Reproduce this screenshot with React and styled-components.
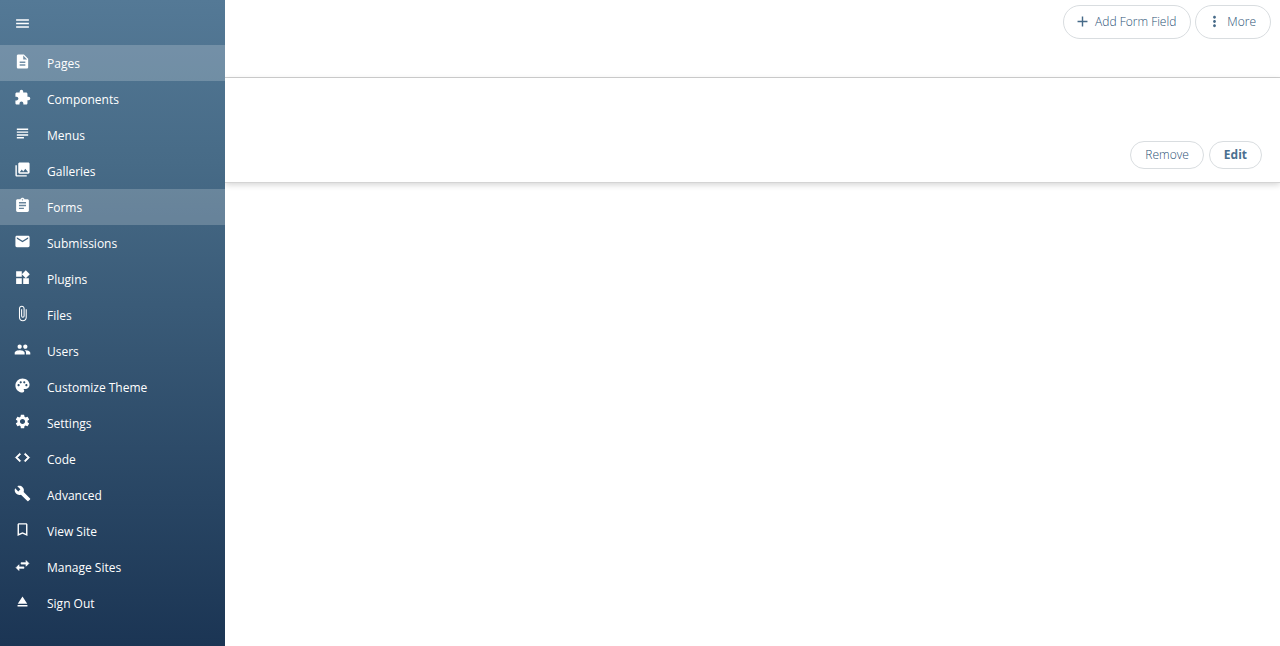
import React from 'react'
import styled, { createGlobalStyle } from 'styled-components'
import {
    MdMenu, MdDescription, MdExtension, MdSubject, MdCollections, MdAssignment, MdEmail,
    MdWidgets, MdAttachFile, MdPeople, MdPalette, MdSettings, MdCode, MdBuild,
    MdBookmarkBorder, MdSwapHoriz, MdEject, MdAdd, MdMoreVert
} from 'react-icons/md'

const links = [
    { name: 'Pages', Icon: MdDescription, active: true },
    { name: 'Components', Icon: MdExtension },
    { name: 'Menus', Icon: MdSubject },
    { name: 'Galleries', Icon: MdCollections },
    { name: 'Forms', Icon: MdAssignment, active: true },
    { name: 'Submissions', Icon: MdEmail },
    { name: 'Plugins', Icon: MdWidgets },
    { name: 'Files', Icon: MdAttachFile },
    { name: 'Users', Icon: MdPeople },
    { name: 'Customize Theme', Icon: MdPalette },
    { name: 'Settings', Icon: MdSettings },
    { name: 'Code', Icon: MdCode, bold: true },
    { name: 'Advanced', Icon: MdBuild },
    { name: 'View Site', Icon: MdBookmarkBorder },
    { name: 'Manage Sites', Icon: MdSwapHoriz, bold: true },
    { name: 'Sign Out', Icon: MdEject }
]

const App = () => {
    return (
        <Layout>
            <GlobalStyle />
            <Sidebar>
                <MenuButton type="button" aria-label="Toggle menu">
                    <MdMenu size={17} />
                </MenuButton>
                <nav>
                    {links.map(({ name, Icon, active, bold }) => (
                        <NavLink key={name} href="#" $active={active} $bold={bold}>
                            <Icon size={17} />
                            <span>{name}</span>
                        </NavLink>
                    ))}
                </nav>
            </Sidebar>
            <Main>
                <Toolbar>
                    <ToolbarButton type="button">
                        <MdAdd size={17} />
                        Add Form Field
                    </ToolbarButton>
                    <ToolbarButton type="button">
                        <MdMoreVert size={17} />
                        More
                    </ToolbarButton>
                </Toolbar>
                <FormPanel>
                    <SmallButton type="button">Remove</SmallButton>
                    <SmallButton type="button" $primary>Edit</SmallButton>
                </FormPanel>
            </Main>
        </Layout>
    )
}

export default App

const GlobalStyle = createGlobalStyle`
    * {
        box-sizing: border-box;
    }

    body {
        margin: 0;
        background-color: #fff;
        font-family: 'Open Sans', sans-serif;
        font-size: 12px;
    }

    button {
        font-family: inherit;
        cursor: pointer;
    }

    /* the icons carry an empty bounding path that must stay invisible */
    svg path[fill='none'] {
        stroke: none;
    }
`

const Layout = styled.div`
    display: flex;
    min-height: 100vh;
`

const Sidebar = styled.aside`
    flex: 0 0 225px;
    z-index: 1;
    background: linear-gradient(#547996, #476b87 25%, #1b3554);
    color: #fff;
`

const MenuButton = styled.button`
    display: flex;
    align-items: center;
    height: 45px;
    padding: 1px 14px 0;
    border: 0;
    background: none;
    color: inherit;
`

const NavLink = styled.a`
    display: flex;
    align-items: center;
    gap: 16px;
    height: 36px;
    padding: 1px 14px 0;
    background-color: ${props => props.$active ? 'rgba(255, 255, 255, 0.2)' : 'transparent'};
    color: inherit;
    line-height: 17px;
    text-decoration: none;

    svg {
        margin-bottom: 4px;
        stroke-width: ${props => props.$bold ? 1 : 0};
    }
`

const Main = styled.main`
    flex: 1;
    min-width: 0;
`

const Toolbar = styled.header`
    display: flex;
    justify-content: flex-end;
    align-items: flex-start;
    gap: 4px;
    height: 78px;
    padding: 5px 9px;
    border-bottom: 1px solid #d0d0d0;
`

const FormPanel = styled.section`
    display: flex;
    justify-content: flex-end;
    align-items: flex-end;
    gap: 5px;
    height: 105px;
    padding: 0 18px 13px;
    border-bottom: 1px solid #d4d4d4;
    box-shadow: 0 2px 6px rgba(0, 0, 0, 0.16);
`

const PillButton = styled.button`
    display: flex;
    align-items: center;
    border: 1px solid #d9dde0;
    border-radius: 17px;
    background-color: #fff;
    color: #2c5276;
    font-size: 12px;
    font-weight: 300;
`

const ToolbarButton = styled(PillButton)`
    gap: 4px;
    height: 34px;
    padding: 0 14px 1px 10px;

    svg {
        color: #466a88;
        stroke-width: 0;
    }
`

const SmallButton = styled(PillButton)`
    height: 28px;
    padding: 0 14px 2px;
    color: ${props => props.$primary ? '#4a6f8f' : '#2c5276'};
    font-weight: ${props => props.$primary ? 700 : 300};
`
